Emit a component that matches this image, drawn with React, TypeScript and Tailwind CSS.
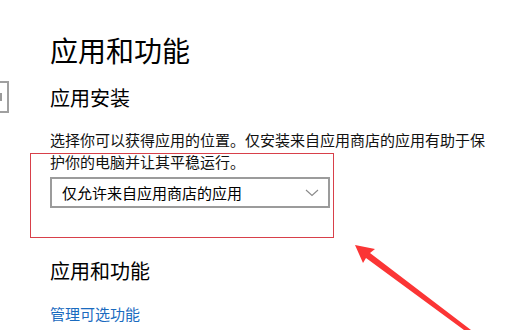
import React from 'react'

const font = { fontFamily: '"Noto Sans CJK SC", "Noto Sans", sans-serif' }

const Chevron = () => (
  <svg width="14" height="8" viewBox="0 0 14 8" fill="none">
    <path d="M1 1 L7 6.5 L13 1" stroke="#8a8a8a" strokeWidth="1.1" />
  </svg>
)

const Arrow = () => (
  <svg className="absolute left-0 top-0" width="511" height="330" viewBox="0 0 511 330">
    <polygon
      points="355,245 375,249 370,253 471,330 464,330 366,258 363,263"
      fill="#fb3535"
    />
  </svg>
)

const App = () => {
  return (
    <div className="relative w-[511px] h-[330px] overflow-hidden bg-white text-black" style={font}>
      <div className="flex flex-row">
        {/* cut-off search box of the sidebar */}
        <div className="w-[9px] mt-[81px] h-[32px] border-2 border-l-0 border-[#a0a0a0] flex items-center">
          <div className="w-[2px] h-[8px] bg-[#9a9a9a]" />
        </div>

        <div className="ml-[41px] w-[440px] flex flex-col pt-[32px]">
          <h1 className="text-[28px] leading-[36px] font-normal">应用和功能</h1>
          <h2 className="mt-[16px] text-[20px] leading-[28px] font-normal">应用安装</h2>
          <p className="mt-[17px] text-[15px] leading-[22px] text-[#111]">
            选择你可以获得应用的位置。仅安装来自应用商店的应用有助于保护你的电脑并让其平稳运行。
          </p>
          <div className="mt-[4px] w-[280px] h-[31px] border-2 border-[#9b9b9b] flex items-center justify-between pl-[10px] pr-[9px]">
            <span className="text-[15px] leading-[22px]">仅允许来自应用商店的应用</span>
            <Chevron />
          </div>
          <h2 className="mt-[49px] text-[20px] leading-[28px] font-normal">应用和功能</h2>
          <a className="mt-[18px] text-[15px] leading-[22px] text-[#1a6bbf]">管理可选功能</a>
        </div>
      </div>

      {/* red annotation */}
      <div className="absolute left-[30px] top-[153px] w-[304px] h-[85px] border border-[#d8404a]" />
      <Arrow />
    </div>
  )
}

export default App
